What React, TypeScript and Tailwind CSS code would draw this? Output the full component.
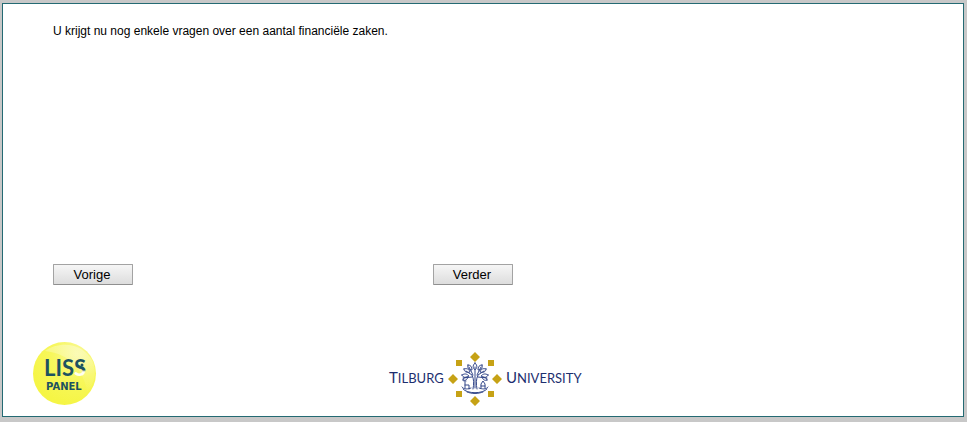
import React from "react";

function SurveyButton({ label }: { label: string }) {
  return (
    <button
      type="button"
      className="h-[21px] w-20 rounded-[1px] border border-[#a3a3a3] border-b-[#8f8f8f] bg-linear-to-b from-[#f6f6f6] to-[#dddddd] pr-[2px] text-center text-[13px] leading-[19px] text-black"
    >
      {label}
    </button>
  );
}

function LissLogo() {
  return (
    <svg className="mb-px" width="64" height="64" viewBox="0 0 64 64" role="img" aria-label="LISS Panel">
      <defs>
        <radialGradient id="ball" cx="0.7" cy="0.2" r="0.8">
          <stop offset="0" stopColor="#f9f99a" />
          <stop offset="0.5" stopColor="#f7f75c" />
          <stop offset="1" stopColor="#f5f545" />
        </radialGradient>
        <linearGradient id="shine" x1="0.7" y1="0" x2="0.5" y2="1">
          <stop offset="0" stopColor="#fff" stopOpacity="0.35" />
          <stop offset="1" stopColor="#fff" stopOpacity="0" />
        </linearGradient>
        <linearGradient id="lastS" x1="0" y1="0" x2="0" y2="1">
          <stop offset="0.58" stopColor="#1d5260" />
          <stop offset="0.66" stopColor="#fffff0" />
        </linearGradient>
      </defs>
      <circle cx="31.500" cy="31.500" r="31.500" fill="url(#ball)" />
      <path d="M12 9C26-1 50 0 60 20c4 12 1 22-6 30C51 29 38 12 12 9Z" fill="url(#shine)" />
      <g fontWeight="700" fill="#1d5260">
        <g fontFamily="Lato, 'Open Sans', sans-serif" fontSize="22">
          <text x="11" y="34">LIS<tspan fill="url(#lastS)">S</tspan></text>
        </g>
        <text x="13" y="48" fontFamily="'DejaVu Sans', sans-serif" fontSize="10">PANEL</text>
      </g>
      <circle cx="49" cy="23" r="1.500" fill="#1d5260" />
    </svg>
  );
}

function TilburgLogo() {
  return (
    <svg width="196" height="56" viewBox="0 0 196 56" role="img" aria-label="Tilburg University">
      <g fontFamily="Lato, 'Open Sans', sans-serif" fill="#1d2f6f">
        <text x="1" y="32" fontSize="15">T<tspan fontSize="13">ILBURG</tspan></text>
        <text x="118" y="32" fontSize="15">U<tspan fontSize="13">NIVERSITY</tspan></text>
      </g>
      <g fill="#c6a215">
        <path d="M87 1l5 5-5 5-5-5zM87 45l5 5-5 5-5-5zM65 23l5 5-5 5-5-5zM109 23l5 5-5 5-5-5z" />
        <path d="M68 9h6v6h-6zM100 9h6v6h-6zM68 40h6v6h-6zM100 40h6v6h-6z" />
      </g>
      <g fill="none" stroke="#34488a" strokeWidth="1" strokeLinecap="round" strokeLinejoin="round">
        <path d="M85 38c1-5 1-10-1-14l-6-4M89 38c-1-5-1-10 1-14l6-4M87 37V16M84 26l-9 1M90 26l9 1M85 24l-4-8M89 24l4-8" />
        <path d="M87 12c-3 3-2 5 0 7 2-2 3-4 0-7ZM80 14c-1 3 1 5 4 5 0-3-1-5-4-5ZM94 14c1 3-1 5-4 5 0-3 1-5 4-5ZM76 18c0 3 3 4 6 3-1-3-3-4-6-3ZM98 18c0 3-3 4-6 3 1-3 3-4 6-3ZM74 24c1 3 4 3 7 1-2-2-4-3-7-1ZM100 24c-1 3-4 3-7 1 2-2 4-3 7-1ZM75 29c2 1 4 0 5-3-3 0-5 1-5 3ZM99 29c-2 1-4 0-5-3 3 0 5 1 5 3Z" />
        <path d="M77 31v6M77 34h4v4M76 30h2M93 37v-4l2-3 2 3v4M93 35h4M74 36c2 3 6 2 9 1M100 36c-2 3-6 2-9 1M75 38c4 5 20 5 24 0M79 41c5 2 11 2 16 0" />
      </g>
    </svg>
  );
}

export default function App() {
  return (
    <div className="flex min-h-screen bg-[#c8c8c8] pt-[3px] pr-[3px] pb-[5px] pl-[2px] font-['Liberation_Sans',Arial,sans-serif]">
      <main className="flex flex-1 flex-col border border-[#246a73] bg-white pt-[19px] pb-[9px]">
        <form className="flex flex-1 flex-col px-[50px]" onSubmit={(e) => e.preventDefault()}>
          <p className="min-h-[241px] text-xs text-black">
            U krijgt nu nog enkele vragen over een aantal financiële zaken.
          </p>
          <div className="flex gap-[300px]">
            <SurveyButton label="Vorige" />
            <SurveyButton label="Verder" />
          </div>
        </form>
        <footer className="flex items-end gap-[291px] pl-[30px]">
          <LissLogo />
          <TilburgLogo />
        </footer>
      </main>
    </div>
  );
}
